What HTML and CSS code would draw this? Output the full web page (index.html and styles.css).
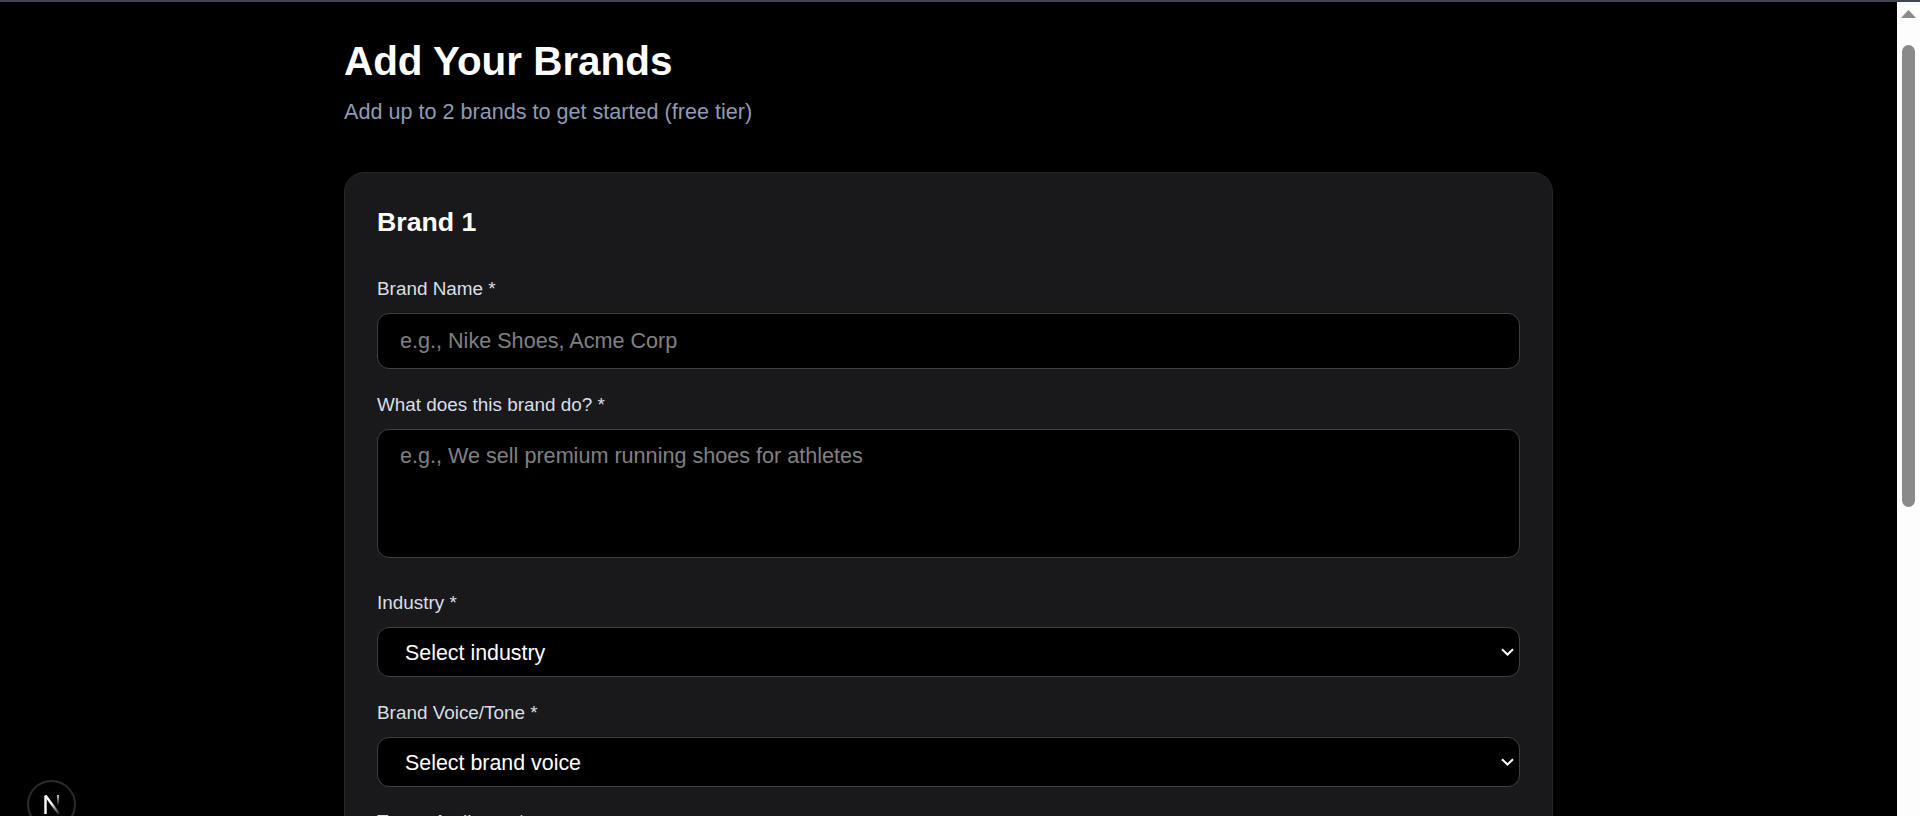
FILE: index.html
```html
<!DOCTYPE html>
<html lang="en">
<head>
    <meta charset="UTF-8">
    <meta name="viewport" content="width=device-width, initial-scale=1.0">
    <title>Add Your Brands</title>
    <link rel="stylesheet" href="styles.css">
</head>
<body>
    <div class="top-strip"></div>
    <div class="window">
        <div class="page">
            <main class="container">
                <h1>Add Your Brands</h1>
                <p class="subtitle">Add up to 2 brands to get started (free tier)</p>

                <section class="card">
                    <h2>Brand 1</h2>

                    <div class="field">
                        <label for="brandName">Brand Name *</label>
                        <input id="brandName" type="text" placeholder="e.g., Nike Shoes, Acme Corp">
                    </div>

                    <div class="field field-area">
                        <label for="brandDesc">What does this brand do? *</label>
                        <textarea id="brandDesc" placeholder="e.g., We sell premium running shoes for athletes"></textarea>
                    </div>

                    <div class="field">
                        <label for="industry">Industry *</label>
                        <select id="industry">
                            <option>Select industry</option>
                        </select>
                    </div>

                    <div class="field">
                        <label for="voice">Brand Voice/Tone *</label>
                        <select id="voice">
                            <option>Select brand voice</option>
                        </select>
                    </div>

                    <div class="field">
                        <label>Target Audience *</label>
                    </div>
                </section>
            </main>

            <button class="dev-badge" aria-label="Open Next.js Dev Tools">
                <svg width="20" height="20" viewBox="0 0 20 20" fill="none">
                    <defs>
                        <linearGradient id="fadeDiag" gradientUnits="userSpaceOnUse" x1="4" y1="0" x2="17" y2="18">
                            <stop offset="0.45" stop-color="#fff"/>
                            <stop offset="1" stop-color="#fff" stop-opacity="0.15"/>
                        </linearGradient>
                        <linearGradient id="fadeStem" gradientUnits="userSpaceOnUse" x1="16" y1="0" x2="16" y2="11">
                            <stop offset="0" stop-color="#fff" stop-opacity="0.8"/>
                            <stop offset="1" stop-color="#fff" stop-opacity="0"/>
                        </linearGradient>
                    </defs>
                    <path d="M3.5 19V0.5" stroke="#fff" stroke-width="2.4"/>
                    <path d="M3.5 0.5L17 19" stroke="url(#fadeDiag)" stroke-width="2.4"/>
                    <rect x="15" y="0" width="2" height="11" fill="url(#fadeStem)"/>
                </svg>
            </button>
        </div>

        <div class="scrollbar">
            <svg class="scroll-arrow" width="15" height="8" viewBox="0 0 15 8">
                <path d="M7.5 0L15 8H0z" fill="#8a8a8a"/>
            </svg>
            <div class="scroll-thumb"></div>
        </div>
    </div>
</body>
</html>
```

FILE: styles.css
```css
* {
    box-sizing: border-box;
}
html, body {
    margin: 0;
    padding: 0;
    height: 100%;
    overflow: hidden;
}
body {
    font-family: "Liberation Sans", Arial, sans-serif;
    background: #000;
    color: #fff;
    display: flex;
    flex-direction: column;
}
.top-strip {
    height: 2px;
    flex-shrink: 0;
    background: #3f4352;
}
.window {
    flex: 1;
    min-height: 0;
    display: flex;
}
.page {
    flex: 1;
    min-width: 0;
    position: relative;
    overflow: hidden;
}
.container {
    width: 1209px;
    margin: 0 auto;
    padding-top: 36px;
}
h1 {
    margin: 0;
    font-size: 40.4px;
    line-height: 46px;
    font-weight: 700;
}
.subtitle {
    margin: 15px 0 0;
    font-size: 21.6px;
    line-height: 26px;
    color: #8f9bb0;
}
.card {
    margin-top: 47px;
    padding: 32px;
    background: #19191b;
    border: 1px solid #27272a;
    border-radius: 20px;
}
h2 {
    margin: 0 0 39px;
    font-size: 26.7px;
    line-height: 34px;
    font-weight: 700;
}
.field {
    margin-bottom: 24px;
}
.field-area {
    margin-bottom: 33px;
}
label {
    display: block;
    margin-bottom: 13px;
    font-size: 18.9px;
    line-height: 22px;
    color: #d9dfe8;
}
.field + .field label {
    padding-top: 1px;
}
.field:last-child label {
    padding-top: 0;
}
input, textarea, select {
    display: block;
    width: 100%;
    background: #000;
    color: #fff;
    border: 1px solid #3f3f46;
    border-radius: 12px;
    font-family: inherit;
    font-size: 21.6px;
    outline: none;
}
input {
    height: 56px;
    padding: 0 22px;
}
textarea {
    height: 129px;
    padding: 13px 22px;
    resize: none;
}
input::placeholder, textarea::placeholder {
    color: #808080;
    opacity: 1;
}
select {
    height: 50px;
    padding: 2px 26px 0 27px;
    font-size: 21.4px;
    appearance: none;
    background-image: url("data:image/svg+xml,%3Csvg xmlns='http://www.w3.org/2000/svg' width='13' height='8' viewBox='0 0 13 8'%3E%3Cpath d='M1 1.2l5.5 5.3 5.5-5.3' fill='none' stroke='%23fff' stroke-width='2'/%3E%3C/svg%3E");
    background-repeat: no-repeat;
    background-position: right 5px center;
}
.dev-badge {
    position: absolute;
    left: 27px;
    top: 778px;
    width: 49px;
    height: 49px;
    padding: 0;
    display: flex;
    align-items: center;
    justify-content: center;
    background: #000;
    border: 2px solid #2c2c2c;
    border-radius: 50%;
}
.scrollbar {
    width: 23px;
    background: #fdfdfd;
    flex-shrink: 0;
    padding-top: 8px;
    display: flex;
    flex-direction: column;
    align-items: center;
}
.scroll-arrow {
    display: block;
}
.scroll-thumb {
    width: 13px;
    height: 462px;
    margin-top: 27px;
    border-radius: 7px;
    background: #8a8a8a;
}
```
